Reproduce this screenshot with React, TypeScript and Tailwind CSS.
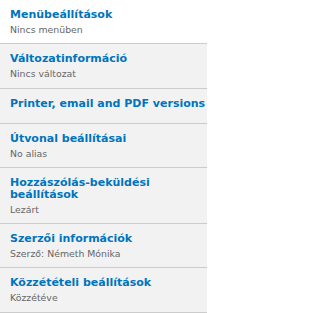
import React from "react";

type Item = { title: string; summary?: string; active?: boolean };

const items: Item[] = [
  { title: "Menübeállítások", summary: "Nincs menüben", active: true },
  { title: "Változatinformáció", summary: "Nincs változat" },
  { title: "Printer, email and PDF versions" },
  { title: "Útvonal beállításai", summary: "No alias" },
  { title: "Hozzászólás-beküldési beállítások", summary: "Lezárt" },
  { title: "Szerzői információk", summary: "Szerző: Németh Mónika" },
  { title: "Közzétételi beállítások", summary: "Közzétéve" },
];

export default function App() {
  return (
    <div className="w-[207px] h-[313px] overflow-hidden bg-white" style={{ fontFamily: '"DejaVu Sans", Verdana, sans-serif' }}>
      <ul className="m-0 p-0 list-none">
        {items.map((it, i) => (
          <li
            key={i}
            className={`border-b border-[#cccccc] ${it.active ? "bg-white" : "bg-[#f2f2f2]"}`}
          >
            <a
              className={`block pl-[10px] pr-0 pt-[9px] no-underline ${it.summary ? "pb-[8.3px]" : "pb-[13px]"}`}
            >
              <strong className="block text-[11px] leading-[12px] font-bold text-[#0074bd]">
                {it.title}
              </strong>
              {it.summary && (
                <span className="block mt-[3px] text-[9.35px] leading-[11px] text-[#666666]">
                  {it.summary}
                </span>
              )}
            </a>
          </li>
        ))}
      </ul>
    </div>
  );
}
